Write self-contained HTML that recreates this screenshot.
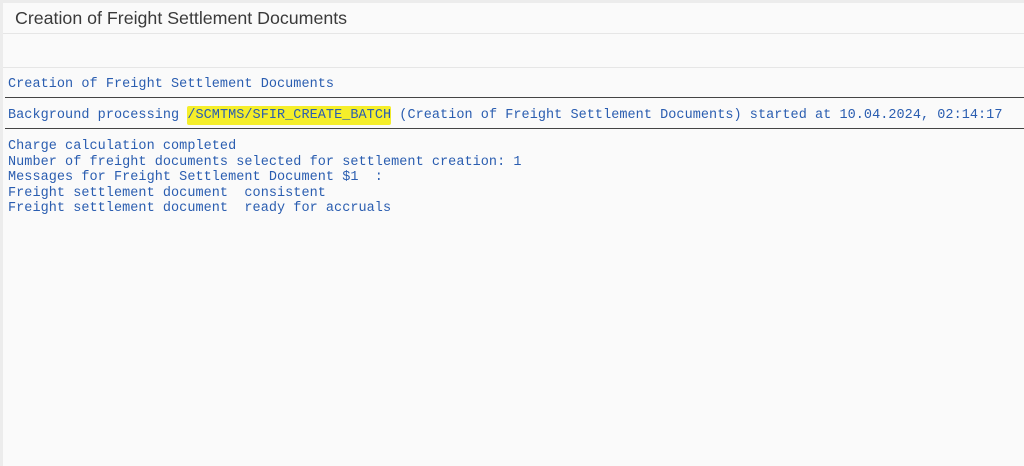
<!DOCTYPE html>
<html><head><style>
body{margin:0;width:1024px;height:466px;background:#fafafa;position:relative;overflow:hidden}
.a{position:absolute}
.m{font-family:"Liberation Mono",monospace;font-size:13.5px;letter-spacing:0.05px;color:#2a5db0;white-space:pre;line-height:15.6px;left:8px}
</style></head><body>
<div class="a" style="left:0;top:0;width:1024px;height:3px;background:#ececec"></div>
<div class="a" style="left:0;top:0;width:3px;height:466px;background:#ececec"></div>
<div class="a" style="left:15px;top:8px;font-family:'Liberation Sans',sans-serif;font-size:17.8px;color:#3a3a3a">Creation of Freight Settlement Documents</div>
<div class="a" style="left:3px;top:33px;width:1021px;height:1px;background:#e6e6e6"></div>
<div class="a" style="left:3px;top:67px;width:1021px;height:1px;background:#e6e6e6"></div>
<div class="a m" style="top:77px">Creation of Freight Settlement Documents</div>
<div class="a" style="left:5px;top:97px;width:1019px;height:1px;background:#444"></div>
<div class="a m" style="top:108px">Background processing <span style="background:#f5ee2a;border-radius:2px;padding:2px 0">/SCMTMS/SFIR_CREATE_BATCH</span> (Creation of Freight Settlement Documents) started at 10.04.2024, 02:14:17</div>
<div class="a" style="left:5px;top:128px;width:1019px;height:1px;background:#444"></div>
<div class="a m" style="top:139px">Charge calculation completed
Number of freight documents selected for settlement creation: 1
Messages for Freight Settlement Document $1  :
Freight settlement document  consistent
Freight settlement document  ready for accruals</div>
</body></html>
